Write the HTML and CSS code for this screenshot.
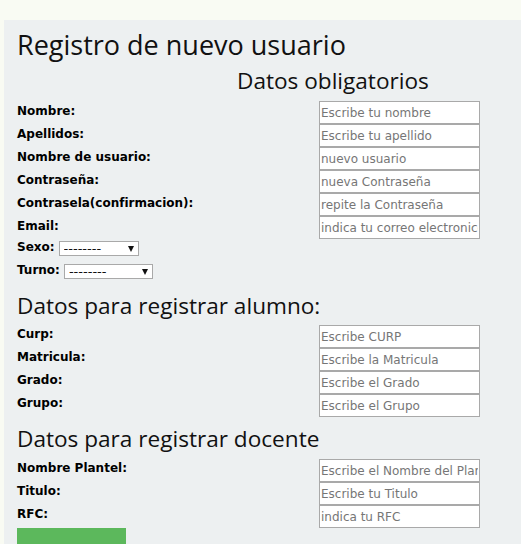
FILE: index.html
```html
<!DOCTYPE html>
<html lang="es">
<head>
<meta charset="utf-8">
<title>Registro de nuevo usuario</title>
<link rel="stylesheet" href="styles.css">
</head>
<body>
<div class="panel">
  <h1 class="title">Registro de nuevo usuario</h1>
  <form class="form">
    <h2 class="subtitle subtitle-main">Datos obligatorios</h2>
    <div class="fields fields-main">
      <div class="row"><label class="label">Nombre:</label><input class="field" type="text" placeholder="Escribe tu nombre"></div>
      <div class="row"><label class="label">Apellidos:</label><input class="field" type="text" placeholder="Escribe tu apellido"></div>
      <div class="row"><label class="label">Nombre de usuario:</label><input class="field" type="text" placeholder="nuevo usuario"></div>
      <div class="row"><label class="label">Contraseña:</label><input class="field" type="password" placeholder="nueva Contraseña"></div>
      <div class="row"><label class="label">Contrasela(confirmacion):</label><input class="field" type="password" placeholder="repite la Contraseña"></div>
      <div class="row"><label class="label">Email:</label><input class="field" type="email" placeholder="indica tu correo electronico"></div>
      <div class="inline-row"><label class="label">Sexo:</label><span class="select-wrap select-sexo"><select class="select"><option>--------</option></select></span></div>
      <div class="inline-row"><label class="label">Turno:</label><span class="select-wrap select-turno"><select class="select"><option>--------</option></select></span></div>
    </div>

    <h2 class="subtitle subtitle-alumno">Datos para registrar alumno:</h2>
    <div class="fields">
      <div class="row"><label class="label">Curp:</label><input class="field" type="text" placeholder="Escribe CURP"></div>
      <div class="row"><label class="label">Matricula:</label><input class="field" type="text" placeholder="Escribe la Matricula"></div>
      <div class="row"><label class="label">Grado:</label><input class="field" type="text" placeholder="Escribe el Grado"></div>
      <div class="row"><label class="label">Grupo:</label><input class="field" type="text" placeholder="Escribe el Grupo"></div>
    </div>

    <h2 class="subtitle subtitle-docente">Datos para registrar docente</h2>
    <div class="fields">
      <div class="row"><label class="label">Nombre Plantel:</label><input class="field" type="text" placeholder="Escribe el Nombre del Plantel"></div>
      <div class="row"><label class="label">Titulo:</label><input class="field" type="text" placeholder="Escribe tu Titulo"></div>
      <div class="row"><label class="label">RFC:</label><input class="field" type="text" placeholder="indica tu RFC"></div>
    </div>

    <button class="submit" type="submit">Registrar</button>
  </form>
</div>
</body>
</html>
```
FILE: styles.css
```css
html, body {
  margin: 0;
  padding: 0;
}

body {
  background: #f9fbf3;
  color: #000;
  font-family: "DejaVu Sans", Verdana, sans-serif;
}

.panel {
  margin: 20px 0 0 4px;
  padding: 6px 0 40px 13px;
  background: #edf0f1;
  min-height: 600px;
}

.title {
  margin: 0;
  font-family: "Open Sans", sans-serif;
  font-weight: 400;
  font-size: 27px;
  line-height: 37px;
  color: #111;
}

.form {
  margin: 0;
}

.subtitle {
  margin: 0;
  font-family: "Open Sans", sans-serif;
  font-weight: 400;
  font-size: 22.6px;
  line-height: 35px;
  color: #111;
}

.subtitle-main {
  margin-left: 220px;
  margin-bottom: 3px;
}

.subtitle-alumno {
  margin-top: 3px;
  margin-bottom: 2px;
}

.subtitle-docente {
  margin-top: 4px;
  margin-bottom: 3px;
}

.fields {
  display: flex;
  flex-direction: column;
}

.row {
  display: grid;
  grid-template-columns: 302px 161px;
  height: 23px;
}

.label {
  font-family: "DejaVu Sans", Verdana, sans-serif;
  font-weight: 700;
  font-size: 12px;
  line-height: 16px;
  padding-top: 1px;
  white-space: nowrap;
}

.fields-main .row .label {
  padding-top: 2px;
}

.field {
  box-sizing: border-box;
  width: 161px;
  height: 23px;
  margin: 0;
  padding: 0 1px;
  border: 1px solid #a9a9a9;
  border-radius: 0;
  background: #fff;
  font-family: "DejaVu Sans", Verdana, sans-serif;
  font-size: 12px;
  color: #222;
  outline: none;
}

.field::placeholder {
  color: #767676;
  opacity: 1;
}

.inline-row {
  display: flex;
  align-items: flex-start;
  gap: 4px;
  height: 23px;
}

.inline-row .label {
  padding-top: 0;
}

.select-wrap {
  position: relative;
  display: inline-block;
  margin-top: 2px;
}

.select-wrap::after {
  content: "";
  position: absolute;
  top: 5px;
  right: 5px;
  width: 0;
  height: 0;
  border-left: 3.5px solid transparent;
  border-right: 3.5px solid transparent;
  border-top: 6px solid #111;
  pointer-events: none;
}

.select {
  box-sizing: border-box;
  appearance: none;
  -webkit-appearance: none;
  display: block;
  height: 15px;
  margin: 0;
  padding: 0 0 0 4px;
  border: 1px solid #a9a9a9;
  border-radius: 0;
  background: #fff;
  font-family: "DejaVu Sans", Verdana, sans-serif;
  font-size: 13px;
  line-height: 13px;
  color: #111;
}

.select-sexo .select {
  width: 80px;
}

.select-turno .select {
  width: 89px;
}

.submit {
  display: block;
  width: 109px;
  height: 56px;
  margin: 0;
  border: none;
  border-radius: 0;
  background: #5cb85c;
  color: #fff;
  font-family: "DejaVu Sans", Verdana, sans-serif;
  font-size: 13px;
}
```
